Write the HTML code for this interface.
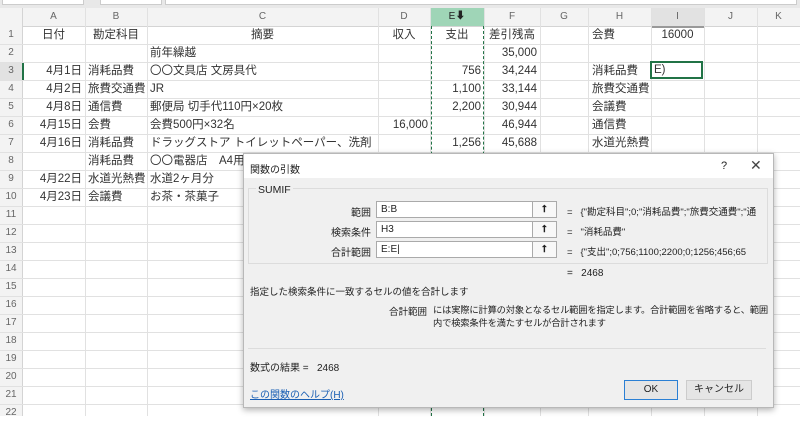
<html><head><style>
body{margin:0;width:800px;height:416px;overflow:hidden;background:#fff;font-family:"Liberation Sans","Noto Sans CJK JP",sans-serif;font-size:11px;color:#333;position:relative}
.a{position:absolute;white-space:nowrap}
.vl{position:absolute;top:8px;height:408px;width:1px;background:#e1e1e1}
.hl{position:absolute;left:0;width:800px;height:1px;background:#e1e1e1}
.ch{position:absolute;top:8px;height:18px;line-height:18px;text-align:center;color:#666;font-size:10px}
.rh{position:absolute;left:0;width:22px;text-align:center;color:#666;font-size:10px;line-height:18px}
.c{position:absolute;height:18px;line-height:18px;font-size:11.5px;color:#333}
.r{text-align:right}
.dlg{position:absolute;left:243px;top:153px;width:529px;height:253px;background:#f0f0f0;border:1px solid #b8b8b8;box-shadow:0 2px 6px rgba(0,0,0,.3);font-size:10px;color:#222;overflow:hidden}
.inp{position:absolute;left:132px;width:151px;height:15px;background:#fff;border:1px solid #aaa;line-height:15px;padding-left:4px}
.btn{position:absolute;left:288px;width:23px;height:15px;border:1px solid #aaa;background:#f8f8f8;text-align:center;line-height:15px;font-weight:bold}
</style></head><body>
<div class="a" style="left:0;top:0;width:800px;height:8px;background:#e8e8e8"></div>
<div class="a" style="left:2px;top:0;width:80px;height:4px;background:#fff;border:1px solid #ccc;border-top:0"></div>
<div class="a" style="left:100px;top:0;width:60px;height:4px;background:#fff;border:1px solid #ccc;border-top:0"></div>
<div class="a" style="left:165px;top:0;width:630px;height:4px;background:#fff;border:1px solid #ccc;border-top:0"></div>
<div class="a" style="left:0;top:8px;width:800px;height:18px;background:#f3f3f3;border-bottom:1px solid #d4d4d4"></div>
<div class="a" style="left:0;top:8px;width:22px;height:408px;background:#f3f3f3;border-right:1px solid #d4d4d4"></div>
<div class="a" style="left:430px;top:8px;width:54px;height:18px;background:#9fd5b7"></div>
<div class="a" style="left:651px;top:8px;width:53px;height:18px;background:#e2e2e2;border-bottom:2px solid #999"></div>
<div class="a" style="left:0;top:62px;width:22px;height:18px;background:#e2e2e2;border-right:2px solid #217346"></div>
<div class="vl" style="left:85px"></div><div class="vl" style="left:147px"></div><div class="vl" style="left:378px"></div><div class="vl" style="left:430px"></div><div class="vl" style="left:484px"></div><div class="vl" style="left:540px"></div><div class="vl" style="left:588px"></div><div class="vl" style="left:651px"></div><div class="vl" style="left:704px"></div><div class="vl" style="left:757px"></div>
<div class="hl" style="top:44px"></div><div class="hl" style="top:62px"></div><div class="hl" style="top:80px"></div><div class="hl" style="top:98px"></div><div class="hl" style="top:116px"></div><div class="hl" style="top:134px"></div><div class="hl" style="top:152px"></div><div class="hl" style="top:170px"></div><div class="hl" style="top:188px"></div><div class="hl" style="top:206px"></div><div class="hl" style="top:224px"></div><div class="hl" style="top:242px"></div><div class="hl" style="top:260px"></div><div class="hl" style="top:278px"></div><div class="hl" style="top:296px"></div><div class="hl" style="top:314px"></div><div class="hl" style="top:332px"></div><div class="hl" style="top:350px"></div><div class="hl" style="top:368px"></div><div class="hl" style="top:386px"></div><div class="hl" style="top:404px"></div>
<div class="a" style="left:431px;top:26px;width:51px;height:390px;border-left:1px dashed #217346;border-right:1px dashed #217346"></div>
<div class="ch" style="left:22px;width:63px">A</div><div class="ch" style="left:85px;width:62px">B</div><div class="ch" style="left:147px;width:231px">C</div><div class="ch" style="left:378px;width:52px">D</div><div class="ch" style="left:430px;width:54px;color:#222">E⬇</div><div class="ch" style="left:484px;width:56px">F</div><div class="ch" style="left:540px;width:48px">G</div><div class="ch" style="left:588px;width:63px">H</div><div class="ch" style="left:651px;width:53px">I</div><div class="ch" style="left:704px;width:53px">J</div><div class="ch" style="left:757px;width:43px">K</div>
<div class="rh" style="top:26px">1</div><div class="rh" style="top:44px">2</div><div class="rh" style="top:62px">3</div><div class="rh" style="top:80px">4</div><div class="rh" style="top:98px">5</div><div class="rh" style="top:116px">6</div><div class="rh" style="top:134px">7</div><div class="rh" style="top:152px">8</div><div class="rh" style="top:170px">9</div><div class="rh" style="top:188px">10</div><div class="rh" style="top:206px">11</div><div class="rh" style="top:224px">12</div><div class="rh" style="top:242px">13</div><div class="rh" style="top:260px">14</div><div class="rh" style="top:278px">15</div><div class="rh" style="top:296px">16</div><div class="rh" style="top:314px">17</div><div class="rh" style="top:332px">18</div><div class="rh" style="top:350px">19</div><div class="rh" style="top:368px">20</div><div class="rh" style="top:386px">21</div><div class="rh" style="top:404px">22</div>
<div class="c" style="top:26px;left:22px;width:63px;text-align:center">日付</div><div class="c" style="top:26px;left:85px;width:62px;text-align:center">勘定科目</div><div class="c" style="top:26px;left:147px;width:231px;text-align:center">摘要</div><div class="c" style="top:26px;left:378px;width:52px;text-align:center">収入</div><div class="c" style="top:26px;left:430px;width:54px;text-align:center">支出</div><div class="c" style="top:26px;left:484px;width:56px;text-align:center">差引残高</div><div class="c" style="top:26px;left:592px">会費</div><div class="c" style="top:26px;left:651px;width:53px;text-align:center">16000</div>
<div class="c" style="top:44px;left:150px">前年繰越</div><div class="c r" style="top:44px;left:484px;width:53px">35,000</div>
<div class="c r" style="top:62px;left:22px;width:60px">4月1日</div><div class="c" style="top:62px;left:88px">消耗品費</div><div class="c" style="top:62px;left:150px">〇〇文具店 文房具代</div><div class="c r" style="top:62px;left:430px;width:51px">756</div><div class="c r" style="top:62px;left:484px;width:53px">34,244</div><div class="c" style="top:62px;left:592px">消耗品費</div>
<div class="a" style="left:650px;top:61px;width:53px;height:18px;border:2px solid #217346;box-sizing:border-box;line-height:14px;padding-left:2px;font-size:11.5px">E)</div>
<div class="c r" style="top:80px;left:22px;width:60px">4月2日</div><div class="c" style="top:80px;left:88px">旅費交通費</div><div class="c" style="top:80px;left:150px">JR</div><div class="c r" style="top:80px;left:430px;width:51px">1,100</div><div class="c r" style="top:80px;left:484px;width:53px">33,144</div><div class="c" style="top:80px;left:592px">旅費交通費</div>
<div class="c r" style="top:98px;left:22px;width:60px">4月8日</div><div class="c" style="top:98px;left:88px">通信費</div><div class="c" style="top:98px;left:150px">郵便局 切手代110円×20枚</div><div class="c r" style="top:98px;left:430px;width:51px">2,200</div><div class="c r" style="top:98px;left:484px;width:53px">30,944</div><div class="c" style="top:98px;left:592px">会議費</div>
<div class="c r" style="top:116px;left:22px;width:60px">4月15日</div><div class="c" style="top:116px;left:88px">会費</div><div class="c" style="top:116px;left:150px">会費500円×32名</div><div class="c r" style="top:116px;left:378px;width:50px">16,000</div><div class="c r" style="top:116px;left:484px;width:53px">46,944</div><div class="c" style="top:116px;left:592px">通信費</div>
<div class="c r" style="top:134px;left:22px;width:60px">4月16日</div><div class="c" style="top:134px;left:88px">消耗品費</div><div class="c" style="top:134px;left:150px">ドラッグストア トイレットペーパー、洗剤</div><div class="c r" style="top:134px;left:430px;width:51px">1,256</div><div class="c r" style="top:134px;left:484px;width:53px">45,688</div><div class="c" style="top:134px;left:592px">水道光熱費</div>
<div class="c" style="top:152px;left:88px">消耗品費</div><div class="c" style="top:152px;left:150px">〇〇電器店　A4用紙</div>
<div class="c r" style="top:170px;left:22px;width:60px">4月22日</div><div class="c" style="top:170px;left:88px">水道光熱費</div><div class="c" style="top:170px;left:150px">水道2ヶ月分</div>
<div class="c r" style="top:188px;left:22px;width:60px">4月23日</div><div class="c" style="top:188px;left:88px">会議費</div><div class="c" style="top:188px;left:150px">お茶・茶菓子</div>
<div class="dlg">
<div class="a" style="left:0;top:0;width:529px;height:24px;background:#fff"></div>
<div class="a" style="left:6px;top:7px">関数の引数</div>
<div class="a" style="left:477px;top:6px;font-size:11px">?</div><div class="a" style="left:506px;top:3px;font-size:14px;color:#444">✕</div>
<div class="a" style="left:4px;top:34px;width:518px;height:74px;border:1px solid #dcdcdc"></div>
<div class="a" style="left:12px;top:30px;background:#f0f0f0;padding:0 2px;font-size:10.5px">SUMIF</div>
<div class="a" style="left:60px;top:50px;width:67px;text-align:right">範囲</div><div class="inp" style="top:47px">B:B</div><div class="btn" style="top:47px">⭡</div><div class="a" style="left:323px;top:50px;font-size:9.5px">=&nbsp;&nbsp;&nbsp;{"勘定科目";0;"消耗品費";"旅費交通費";"通</div>
<div class="a" style="left:60px;top:70px;width:67px;text-align:right">検索条件</div><div class="inp" style="top:67px">H3</div><div class="btn" style="top:67px">⭡</div><div class="a" style="left:323px;top:70px;font-size:9.5px">=&nbsp;&nbsp;&nbsp;"消耗品費"</div>
<div class="a" style="left:60px;top:90px;width:67px;text-align:right">合計範囲</div><div class="inp" style="top:87px">E:E|</div><div class="btn" style="top:87px">⭡</div><div class="a" style="left:323px;top:90px;font-size:9.5px">=&nbsp;&nbsp;&nbsp;{"支出";0;756;1100;2200;0;1256;456;65</div>
<div class="a" style="left:323px;top:114px">=&nbsp;&nbsp;&nbsp;2468</div>
<div class="a" style="left:6px;top:130px;font-size:9.5px">指定した検索条件に一致するセルの値を合計します</div>
<div class="a" style="left:145px;top:150px;font-size:9.5px">合計範囲</div>
<div class="a" style="left:189px;top:150px;width:336px;white-space:normal;line-height:13px;font-size:9.3px;letter-spacing:-0.2px">には実際に計算の対象となるセル範囲を指定します。合計範囲を省略すると、範囲内で検索条件を満たすセルが合計されます</div>
<div class="a" style="left:4px;top:194px;width:518px;height:1px;background:#dcdcdc"></div>
<div class="a" style="left:6px;top:205px">数式の結果 =&nbsp;&nbsp;&nbsp;2468</div>
<div class="a" style="left:6px;top:232px;color:#1a5fb4;text-decoration:underline">この関数のヘルプ(H)</div>
<div class="a" style="left:380px;top:226px;width:52px;height:18px;border:1px solid #2a7fd4;background:#e5e5e5;text-align:center;line-height:18px">OK</div>
<div class="a" style="left:442px;top:226px;width:64px;height:18px;border:1px solid #ccc;background:#e5e5e5;text-align:center;line-height:18px">キャンセル</div>
</div>
</body></html>
